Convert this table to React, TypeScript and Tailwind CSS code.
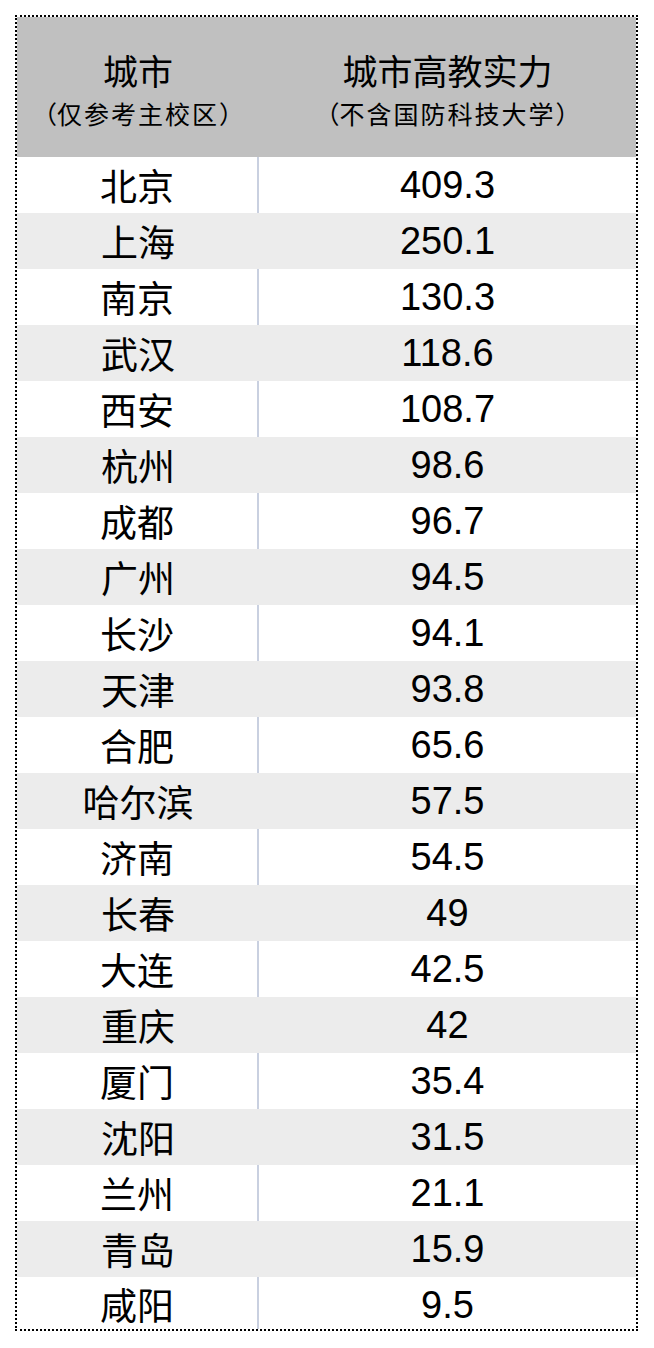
const rows: [string, string][] = [
  ['北京', '409.3'],
  ['上海', '250.1'],
  ['南京', '130.3'],
  ['武汉', '118.6'],
  ['西安', '108.7'],
  ['杭州', '98.6'],
  ['成都', '96.7'],
  ['广州', '94.5'],
  ['长沙', '94.1'],
  ['天津', '93.8'],
  ['合肥', '65.6'],
  ['哈尔滨', '57.5'],
  ['济南', '54.5'],
  ['长春', '49'],
  ['大连', '42.5'],
  ['重庆', '42'],
  ['厦门', '35.4'],
  ['沈阳', '31.5'],
  ['兰州', '21.1'],
  ['青岛', '15.9'],
  ['咸阳', '9.5'],
];

const cjk = "font-['Noto_Sans_CJK_SC',sans-serif]";

// fullwidth parens, kept at a full em each like the original
function Sub({ text }: { text: string }) {
  return (
    <div className="text-[25px] leading-[28px] mt-[9px] flex">
      <span className="inline-block w-[1.2em] text-right">（</span>
      <span className="tracking-[2px]">{text}</span>
      <span className="inline-block w-[1.2em] text-left">）</span>
    </div>
  );
}

export default function App() {
  return (
    <div className="bg-white w-[654px] h-[1348px] pt-[15px] pl-[15px]">
      <div className="w-[623px] border-2 border-dotted border-black">
        {/* header */}
        <div className={`h-[140px] bg-[#c0c0c0] flex text-black ${cjk}`}>
          <div className="w-[242px] flex flex-col items-center pt-[33px]">
            <div className="text-[35px] leading-[40px]">城市</div>
            <Sub text="仅参考主校区" />
          </div>
          <div className="flex-1 flex flex-col items-center pt-[33px]">
            <div className="text-[35px] leading-[40px]">城市高教实力</div>
            <Sub text="不含国防科技大学" />
          </div>
        </div>

        {rows.map(([city, score], i) => {
          const last = i === rows.length - 1;
          return (
            <div
              key={city}
              className={`flex text-black leading-none ${last ? 'h-[52px] pt-[3px]' : 'h-[56px]'} ${
                i % 2 === 1 ? 'bg-[#ececec]' : 'bg-white'
              }`}
            >
              <div
                className={`w-[242px] flex items-center justify-center text-[37px] ${cjk} ${
                  i % 2 === 1 ? '' : 'border-r-2 border-[#c9d0e0]'
                } ${last ? '-mt-[3px] pt-[3px]' : ''}`}
              >
                {city}
              </div>
              <div className="flex-1 flex items-center justify-center text-[38px] font-['Liberation_Sans',Arial,sans-serif]">
                {score}
              </div>
            </div>
          );
        })}
      </div>
    </div>
  );
}
